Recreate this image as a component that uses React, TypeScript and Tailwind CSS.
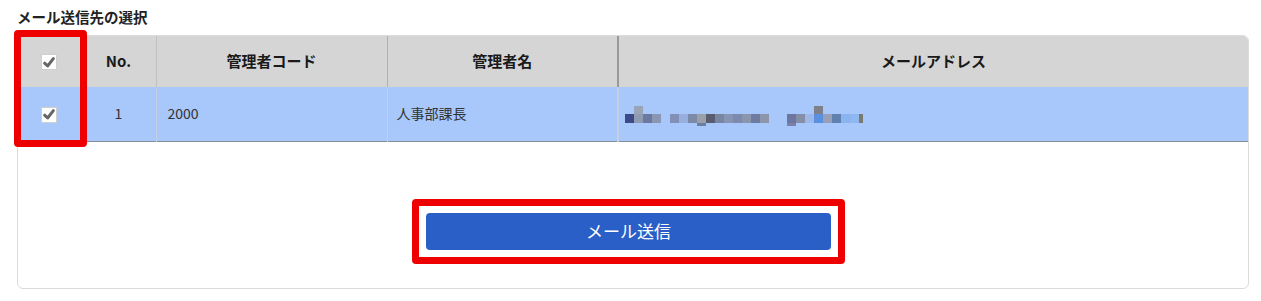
const mosaic: [number, number, number, number, string][] = [
  // x, y, w, h, colour (relative to the address cell)
  [0, 8, 9, 9, "#3d4a8a"],
  [9, 0, 9, 8, "#9aa4b8"],
  [9, 8, 9, 9, "#8f9bb0"],
  [18, 8, 9, 9, "#6b78a0"],
  [27, 8, 9, 9, "#8a96b4"],
  [45, 8, 9, 9, "#8190b4"],
  [54, 8, 9, 9, "#98aede"],
  [63, 8, 9, 9, "#7c8aa8"],
  [72, 8, 9, 9, "#9aa0a8"],
  [72, 17, 9, 3, "#6a7ea0"],
  [81, 8, 9, 9, "#5a5c70"],
  [90, 8, 9, 9, "#7886a2"],
  [99, 8, 9, 9, "#8794b4"],
  [108, 8, 9, 9, "#7d8ab0"],
  [117, 8, 9, 9, "#8a96ae"],
  [126, 8, 9, 9, "#6e7aa0"],
  [135, 8, 9, 9, "#8c95aa"],
  [162, 8, 9, 9, "#6e75a0"],
  [162, 17, 9, 3, "#7a80a8"],
  [171, 8, 9, 9, "#8590a8"],
  [180, 8, 9, 9, "#a0b8e8"],
  [189, 0, 9, 8, "#7f8088"],
  [189, 8, 9, 9, "#5a90e0"],
  [198, 8, 9, 9, "#97a0b8"],
  [207, 8, 9, 9, "#6080b0"],
  [216, 8, 9, 9, "#8ab4f0"],
  [225, 8, 9, 9, "#90b8f0"],
  [234, 8, 4, 9, "#7a7a70"],
];

function CheckBox() {
  return (
    <span className="inline-flex h-[16px] w-[16px] items-center justify-center border border-[#cfcfcf] bg-white">
      <svg viewBox="0 0 16 16" className="h-[15px] w-[15px]">
        <path d="M3 8.8 L6.4 12 L13 3.6" fill="none" stroke="#666" strokeWidth="3.4" strokeLinecap="round" strokeLinejoin="round" />
      </svg>
    </span>
  );
}

export default function App() {
  return (
    <div
      className="min-h-[301px] bg-white pl-[17px] pr-[12px] pt-[7px] text-[#222]"
      style={{ fontFamily: '"Noto Sans CJK JP", "Noto Sans", sans-serif' }}
    >
      <h2 className="text-[14.5px] font-bold leading-[20px] text-[#222] mb-[8px]">メール送信先の選択</h2>

      <div className="relative rounded-[6px] border border-[#dcdcdc] bg-white">
        <table className="w-full table-fixed border-collapse text-[14px]">
          <colgroup>
            <col className="w-[63px]" />
            <col className="w-[75px]" />
            <col className="w-[231px]" />
            <col className="w-[231px]" />
            <col />
          </colgroup>
          <thead>
            <tr className="h-[51px] bg-[#d5d5d5] text-[15px] font-bold text-[#1a1a1a]">
              <th className="rounded-tl-[5px] border-r border-[#c0c0c0] text-center align-middle">
                <span className="inline-flex pt-[6px]"><CheckBox /></span>
              </th>
              <th className="border-r border-[#c0c0c0] text-center">No.</th>
              <th className="border-r border-[#b0b0b0] text-center">管理者コード</th>
              <th className="border-r-2 border-[#9a9a9a] text-center">管理者名</th>
              <th className="rounded-tr-[5px] text-center">メールアドレス</th>
            </tr>
          </thead>
          <tbody>
            <tr className="h-[54px] border-b border-[#8a8c94] bg-[#a8c7fb] text-[#333]">
              <td className="border-r border-[#c4cfe2] text-center align-middle">
                <span className="inline-flex pt-[6px]"><CheckBox /></span>
              </td>
              <td className="border-r border-[#c4cfe2] text-center">1</td>
              <td className="border-r border-[#c4cfe2] pl-[11px]">2000</td>
              <td className="border-r-2 border-[#c4cfe2] pl-[9px]">人事部課長</td>
              <td className="pl-[6px]">
                <svg width="240" height="20" className="mt-[4px] block">
                  {mosaic.map(([x, y, w, h, c], i) => (
                    <rect key={i} x={x} y={y} width={w} height={h} fill={c} />
                  ))}
                </svg>
              </td>
            </tr>
          </tbody>
        </table>

        <div className="flex justify-center pr-[9px] pt-[57px] pb-[24px]">
          <div className="rounded-[4px] border-[7px] border-[#ee0000] bg-white p-[7px]">
            <button className="h-[37px] w-[405px] rounded-[4px] bg-[#2b5fc8] text-[17px] text-white">メール送信</button>
          </div>
        </div>

        {/* annotation around the checkbox column */}
        <div className="pointer-events-none absolute left-[-4px] top-[-6px] h-[117px] w-[73px] rounded-[4px] border-[7px] border-[#ee0000]" />
      </div>
    </div>
  );
}
